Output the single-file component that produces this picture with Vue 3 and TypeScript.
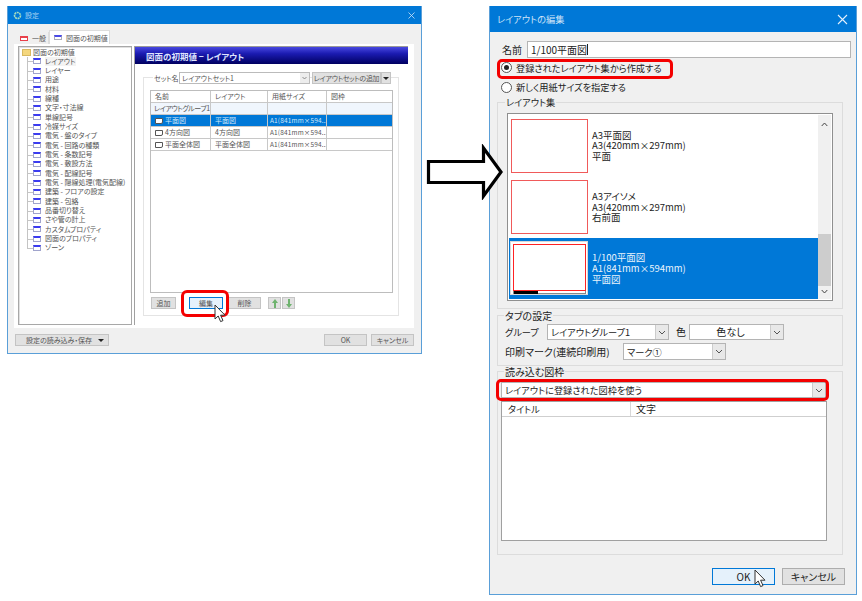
<script setup lang="ts">
const treeItems: string[] = [
  'レイアウト', 'レイヤー', '用途', '材料', '線種', '文字・寸法線', '単線記号', '冷媒サイズ',
  '電気 - 盤のタイプ', '電気 - 回路の種類', '電気 - 条数記号', '電気 - 敷設方法', '電気 - 配線記号',
  '電気 - 隠線処理(電気配線)', '建築 - フロアの設定', '建築 - 包絡', '品番切り替え', 'さや管の計上',
  'カスタムプロパティ', '図面のプロパティ', 'ゾーン'
]
interface Row { name: string; layout: string; size: string; frame: string; icon: boolean; cls: string }
const rows: Row[] = [
  { name: 'レイアウトグループ1', layout: '', size: '', frame: '', icon: false, cls: 'group' },
  { name: '平面図', layout: '平面図', size: 'A1(841mm×594...', frame: '', icon: true, cls: 'sel' },
  { name: '4方向図', layout: '4方向図', size: 'A1(841mm×594...', frame: '', icon: true, cls: '' },
  { name: '平面全体図', layout: '平面全体図', size: 'A1(841mm×594...', frame: '', icon: true, cls: '' }
]
interface Item { lines: string[]; sel: boolean }
const items: Item[] = [
  { lines: ['A3平面図', 'A3(420mm×297mm)', '平面'], sel: false },
  { lines: ['A3アイソメ', 'A3(420mm×297mm)', '右前面'], sel: false },
  { lines: ['1/100平面図', 'A1(841mm×594mm)', '平面図'], sel: true }
]
</script>

<template>
  <div class="stage">
    <!-- settings window -->
    <section class="win win-a">
      <header class="title title-a">
        <svg class="gear" width="9" height="9" viewBox="0 0 9 9"><circle cx="4.5" cy="4.5" r="3" fill="none" stroke="#a6dcc0" stroke-width="1.6" stroke-dasharray="2 .6" /></svg>
        <span class="title-text">設定</span>
        <svg class="close-a" width="7" height="7" viewBox="0 0 7 7"><path d="M.5.5l6 6M6.5.5l-6 6" stroke="#cfe4f7" stroke-width=".8" /></svg>
      </header>
      <div class="tabs">
        <div class="tab"><i class="tab-ico red"></i><span>一般</span></div>
        <div class="tab on"><i class="tab-ico"></i><span>図面の初期値</span></div>
      </div>
      <div class="page">
        <div class="tree">
          <div class="root"><i class="folder"></i><span>図面の初期値</span></div>
          <div class="branch">
            <div v-for="(t, i) in treeItems" :key="t" class="leaf" :class="{ last: i === treeItems.length - 1 }">
              <i class="leaf-ico"></i><span class="leaf-t" :class="{ cur: i === 0 }">{{ t }}</span>
            </div>
          </div>
        </div>
        <div class="pane">
          <div class="banner">図面の初期値 − レイアウト</div>
          <fieldset class="set">
            <div class="set-top">
              <span class="set-lb">セット名</span>
              <div class="mini-combo"><span>レイアウトセット1</span><i class="mini-arrow">
                <svg width="5" height="4" viewBox="0 0 5 4"><path d="M.5 1l2 2 2-2" fill="none" stroke="#777" stroke-width=".8" /></svg></i></div>
              <div class="mini-btn add"><span>レイアウトセットの追加</span></div>
              <div class="mini-btn drop"><i class="tri"></i></div>
            </div>
            <div class="grid-a">
              <div class="tr head"><span class="c1">名前</span><span class="c2">レイアウト</span><span class="c3">用紙サイズ</span><span class="c4">図枠</span></div>
              <div v-for="r in rows" :key="r.name" class="tr" :class="r.cls">
                <span class="c1"><i v-if="r.icon" class="sheet"></i>{{ r.name }}</span>
                <span class="c2">{{ r.layout }}</span><span class="c3 wide">{{ r.size }}</span><span class="c4">{{ r.frame }}</span>
              </div>
            </div>
            <div class="set-btns">
              <div class="mini-btn b1">追加</div>
              <div class="mini-btn b2 hot">編集</div>
              <div class="mini-btn b3">削除</div>
              <div class="mini-btn b4"><svg width="6" height="9" viewBox="0 0 6 9"><path d="M3 0L6 4H4V9H2V4H0Z" fill="#6fb36f" /></svg></div>
              <div class="mini-btn b4"><svg width="6" height="9" viewBox="0 0 6 9"><path d="M3 9L6 5H4V0H2V5H0Z" fill="#6fb36f" /></svg></div>
            </div>
          </fieldset>
        </div>
      </div>
      <footer class="foot-a">
        <div class="mini-btn io"><span>設定の読み込み・保存</span><i class="tri"></i></div>
        <div class="foot-r">
          <div class="mini-btn ok-a">OK</div>
          <div class="mini-btn ok-a">キャンセル</div>
        </div>
      </footer>
    </section>

    <!-- layout edit window -->
    <section class="win win-b">
      <header class="title title-b">
        <span class="title-b-t">レイアウトの編集</span>
        <svg width="11" height="11" viewBox="0 0 11 11"><path d="M1 1l9 9M10 1l-9 9" stroke="#e4f0fb" stroke-width="1.1" /></svg>
      </header>
      <div class="body-b">
        <div class="name-row"><label>名前</label><div class="input">1/100平面図<i class="caret"></i></div></div>
        <div class="radio r1"><i class="dot on"></i>登録されたレイアウト集から作成する</div>
        <div class="radio r2"><i class="dot"></i>新しく用紙サイズを指定する</div>

        <fieldset class="grp g1">
          <legend>レイアウト集</legend>
          <div class="list">
            <div class="list-main">
              <div v-for="it in items" :key="it.lines[0]" class="item" :class="{ sel: it.sel }">
                <div class="thumb"><div class="thumb-red"></div><div v-if="it.sel" class="thumb-bar"><b></b></div></div>
                <div class="item-t"><div v-for="l in it.lines" :key="l">{{ l }}</div></div>
              </div>
            </div>
            <div class="sb">
              <svg width="7" height="5" viewBox="0 0 7 5"><path d="M.7 4l2.8-3 2.8 3" fill="none" stroke="#444" stroke-width="1" /></svg>
              <div class="sb-track"><div class="sb-thumb"></div></div>
              <svg width="7" height="5" viewBox="0 0 7 5"><path d="M.7 1l2.8 3 2.8-3" fill="none" stroke="#444" stroke-width="1" /></svg>
            </div>
          </div>
        </fieldset>

        <fieldset class="grp g2">
          <legend>タブの設定</legend>
          <div class="row-1">
            <label class="l-group">グループ</label>
            <div class="combo w-group"><span>レイアウトグループ1</span><i class="combo-a"><svg width="8" height="5" viewBox="0 0 8 5"><path d="M1 1l3 3 3-3" fill="none" stroke="#555" stroke-width="1" /></svg></i></div>
            <label class="l-color">色</label>
            <div class="combo w-color"><span class="ctr">色なし</span><i class="combo-a"><svg width="8" height="5" viewBox="0 0 8 5"><path d="M1 1l3 3 3-3" fill="none" stroke="#555" stroke-width="1" /></svg></i></div>
          </div>
          <div class="row-2">
            <label class="l-mark">印刷マーク(連続印刷用)</label>
            <div class="combo w-mark"><span>マーク①</span><i class="combo-a"><svg width="8" height="5" viewBox="0 0 8 5"><path d="M1 1l3 3 3-3" fill="none" stroke="#555" stroke-width="1" /></svg></i></div>
          </div>
        </fieldset>

        <fieldset class="grp g3">
          <legend>読み込む図枠</legend>
          <div class="combo w-frame"><span>レイアウトに登録された図枠を使う</span><i class="combo-a"><svg width="8" height="5" viewBox="0 0 8 5"><path d="M1 1l3 3 3-3" fill="none" stroke="#555" stroke-width="1" /></svg></i></div>
          <div class="grid-b">
            <div class="grid-b-h"><span class="t1">タイトル</span><span class="t2">文字</span></div>
          </div>
        </fieldset>

        <div class="foot-b">
          <div class="btn-b hot-b">OK</div>
          <div class="btn-b">キャンセル</div>
        </div>
      </div>
    </section>

    <!-- arrow between the windows, lying over the right one -->
    <svg class="arrow" width="80" height="56" viewBox="0 0 80 56">
      <path d="M2.5 17.5H57.5V4L75 28 57.5 52V38.5H2.5Z" fill="#fff" stroke="#000" stroke-width="3.2" />
    </svg>

    <!-- highlights and pointers lying over the windows -->
    <div class="mark m1"></div>
    <div class="mark m2"></div>
    <div class="mark m3"></div>
    <svg class="ptr p1" width="13" height="19" viewBox="0 0 13 19"><path d="M1 1V15L4.2 12 6.6 17.6 9 16.6 6.6 11.2H11Z" fill="#fff" stroke="#333" stroke-width="1" stroke-linejoin="round" /></svg>
    <svg class="ptr p2" width="13" height="19" viewBox="0 0 13 19"><path d="M1 1V15L4.2 12 6.6 17.6 9 16.6 6.6 11.2H11Z" fill="#fff" stroke="#333" stroke-width="1" stroke-linejoin="round" /></svg>
  </div>
</template>

<style>
html, body { margin: 0; background: #fff; }
</style>

<style scoped>
* { box-sizing: border-box; }
i { display: block; font-style: normal; }
fieldset { margin: 0; min-width: 0; }
.stage {
  position: relative;
  width: 862px;
  height: 601px;
  overflow: hidden;
  background: #fff;
  font-family: "Noto Sans CJK JP", "Noto Sans", sans-serif;
  font-feature-settings: "palt";
  color: #333;
}
.win {
  position: absolute;
  display: flex;
  flex-direction: column;
  background: #f0f0f0;
  border: 1px solid #5a9fd8;
  border-top: 0;
}
.win-a { left: 7px; top: 6px; width: 415px; height: 348px; font-size: 7px; line-height: 10px; color: #555; }
.win-b { left: 489px; top: 6px; width: 368px; height: 589px; font-size: 9.2px; line-height: 12px; color: #222; }

.title { display: flex; align-items: center; background: #0078d7; flex: none; }
.title-a { height: 18px; padding: 0 6px 0 5px; gap: 3px; }
.title-text { color: #a8d2f2; flex: 1; }
.gear { flex: none; }
.title-b { height: 26px; padding: 0 8px 0 7px; justify-content: space-between; }
.title-b-t { color: #cfe4f7; font-size: 9.2px; }

/* settings: tabs */
.tabs { display: flex; align-items: flex-end; height: 20px; padding-left: 8px; flex: none; }
.tab { display: flex; align-items: center; gap: 4px; height: 12px; width: 33px; padding-left: 4px; background: #f0f0f0; border-right: 1px solid #ddd; }
.tab.on { height: 14px; width: 61px; background: #fff; border: 1px solid #ddd; border-bottom: 0; }
.tab-ico { width: 8px; height: 5px; background: #fff; border: 1px solid #aab; border-top: 2px solid #4a4ae8; }
.tab-ico.red { border-color: #e8404a; }

.page { display: flex; gap: 2px; margin: 0 7px 0 6px; height: 284px; background: #fff; padding: 2px 5px 3px 4px; flex: none; }
.tree { width: 114px; height: 279px; border: 1px solid #a8a8a8; box-shadow: inset 1px 1px 0 #e0e0e0; padding: 1px 0 0 10px; flex: none; line-height: 9.34px; }
.root { display: flex; align-items: center; gap: 2px; height: 8.8px; margin-left: -7px; white-space: nowrap; }
.folder { width: 9px; height: 7px; background: #f4d77e; border: 1px solid #d8b960; }
.branch { margin-left: -2px; }
.leaf { position: relative; display: flex; align-items: center; gap: 4px; height: 9.34px; padding-left: 6px; white-space: nowrap; }
.leaf::before { content: ""; position: absolute; left: 0; top: 0; bottom: 0; border-left: 1px solid #c4c4c4; }
.leaf.last::before { bottom: 50%; }
.leaf::after { content: ""; position: absolute; left: 0; top: 50%; width: 6px; border-top: 1px solid #c4c4c4; }
.leaf-ico { width: 8px; height: 6px; background: #fff; border: 1px solid #a0a4cc; border-top: 2px solid #3c3cf0; flex: none; }
.leaf-t.cur { background: #f3f3f3; }

.pane { flex: 1; min-width: 0; display: flex; flex-direction: column; border-left: 1px solid #a0a0a0; }
.banner {
  height: 18px;
  flex: none;
  margin-right: 1px;
  padding-left: 11px;
  color: #dfe4ff;
  font-size: 8.5px;
  line-height: 18px;
  font-weight: 700;
  background: linear-gradient(180deg, #4848e0 0%, #1a1ab0 40%, #000060 100%);
  border-top: 1px solid #9a9a9a;
}
.set { margin: 13px 10px 0 8px; height: 239px; border: 1px solid #e4e4e4; padding: 0; display: flex; flex-direction: column; }
.set-top { display: flex; align-items: center; height: 12px; margin: -6px 0 0 9px; }
.set-lb { background: #fff; padding: 0 1px; width: 26px; white-space: nowrap; }
.mini-combo { display: flex; justify-content: space-between; align-items: center; width: 131px; height: 12px; background: #fff; border: 1px solid #bbb; padding-left: 2px; white-space: nowrap; }
.mini-arrow { width: 9px; height: 10px; background: #ededed; display: flex; align-items: center; justify-content: center; }
.mini-btn { display: flex; align-items: center; justify-content: center; background: #e1e1e1; border: 1px solid #c4c4c4; height: 12px; white-space: nowrap; color: #555; }
.add { width: 69px; margin-left: 2px; letter-spacing: -.3px; }
.drop { width: 10px; }
.tri { width: 0; height: 0; border-left: 3px solid transparent; border-right: 3px solid transparent; border-top: 3px solid #222; }

.grid-a { width: 243px; height: 203px; margin: 6px 0 0 6px; border: 1px solid #bdbdbd; flex: none; }
.tr { display: grid; grid-template-columns: 60px 57px 59px 1fr; height: 12px; border-bottom: 1px solid #c8c8c8; align-items: stretch; }
.tr > span { padding-left: 4px; border-right: 1px solid #c8c8c8; white-space: nowrap; overflow: hidden; line-height: 11px; display: flex; align-items: center; }
.tr > span:last-child { border-right: 0; }
.tr.group { background: #f0f6fd; }
.tr.group .c1 { padding-left: 3px; letter-spacing: -.45px; }
.tr.sel { background: #0078d7; color: #d6e9f9; }
.c1 { gap: 2px; }
.tr .wide { padding-left: 2px; letter-spacing: .15px; font-size: 6.5px; }
.sheet { width: 8px; height: 6px; background: #fff; border: 1px solid #555; border-radius: 0 0 2px 0; flex: none; }

.set-btns { display: flex; margin: 4px 0 0 7px; }
.b1 { width: 25px; }
.b2 { width: 34px; margin-left: 13px; }
.hot { background: #e5f1fb; border-color: #0078d7; }
.b3 { width: 33px; margin-left: 5px; }
.b4 { width: 13px; margin-right: 1px; }
.b3 + .b4 { margin-left: 7px; }

.foot-a { display: flex; justify-content: space-between; padding: 6px 7px 0 7px; }
.io { width: 94px; justify-content: space-between; padding: 0 4px 0 10px; }
.foot-r { display: flex; gap: 4px; }
.ok-a { width: 43px; }

/* edit window */
.body-b { display: flex; flex-direction: column; padding: 9px 5px 0 7px; flex: 1; }
.name-row { display: flex; align-items: center; height: 17px; padding-left: 5px; font-size: 10px; }
.name-row label { width: 25px; }
.input { flex: 1; height: 17px; background: #fff; border: 1px solid #b4b4b4; padding-left: 3px; line-height: 15px; display: flex; align-items: center; }
.caret { width: 1px; height: 11px; background: #222; }
.radio { display: flex; align-items: center; gap: 4px; height: 19px; padding-left: 4px; }
.r2 { height: 18px; margin-top: 1px; }
.dot { width: 11px; height: 11px; border: 1px solid #555; border-radius: 50%; background: #fff; position: relative; }
.dot.on::after { content: ""; position: absolute; inset: 2px; background: #222; border-radius: 50%; }

.grp { border: 1px solid #dcdcdc; padding: 0; display: block; width: 346px; }
.grp legend { font-size: 10px; line-height: 11px; padding: 0 1px; color: #222; }
.g1 { height: 212px; margin-top: 1px; padding: 5px 9px 0 9px; }
.g1 legend { font-size: 9.2px; margin-left: -2px; }
.g2 { height: 56px; margin-top: 1px; padding: 3px 0 0 7px; }
.g2 legend { margin-left: -1px; }
.g3 { height: 189px; margin-top: 0; padding: 5px 0 0 3px; }
.g3 legend { margin-left: 3px; }

.list { display: flex; height: 188px; border: 1px solid #8f8f8f; background: #fff; padding: 1px; }
.list-main { width: 309px; flex: none; display: flex; flex-direction: column; justify-content: flex-end; overflow: hidden; }
.item { display: flex; align-items: center; height: 62px; gap: 4px; padding-left: 2px; }
.item.sel { background: #0078d7; color: #fff; padding-left: 1px; gap: 4px; }
.thumb { width: 77px; height: 54px; background: #fff; border: 1px solid #f05a5a; flex: none; display: flex; flex-direction: column; }
.sel .thumb { width: 78px; height: 54px; border: 1px solid #d8d8d8; padding: 2px 1px 0 2px; }
.thumb-red { height: 47px; border: 1px solid #f22; flex: none; }
.thumb:not(:has(.thumb-bar)) .thumb-red { display: none; }
.thumb-bar { height: 3px; border: 1px solid #888; border-top: 0; background: #fff; flex: none; }
.thumb-bar b { display: block; width: 34%; height: 3px; background: #000; }
.item-t { font-size: 9.5px; line-height: 10.7px; white-space: nowrap; color: #222; }
.sel .item-t { color: #eaf4fc; }
.sb { flex: 1; display: flex; flex-direction: column; align-items: center; background: #f0f0f0; padding: 7px 0 5px; }
.sb-track { flex: 1; width: 100%; display: flex; flex-direction: column; justify-content: flex-end; padding-bottom: 3px; }
.sb-thumb { height: 52px; background: #cdcdcd; }

.row-1 { display: flex; align-items: center; height: 16px; }
.row-2 { display: flex; align-items: center; height: 17px; margin-top: 3px; }
.combo { display: flex; align-items: center; justify-content: space-between; background: #fff; border: 1px solid #b4b4b4; height: 16px; white-space: nowrap; padding-left: 3px; }
.combo span { flex: 1; }
.ctr { text-align: center; padding-right: 2px; font-size: 10px; }
.combo-a { width: 13px; align-self: stretch; background: #e8e8e8; border-left: 1px solid #ccc; display: flex; align-items: center; justify-content: center; flex: none; }
.l-group { width: 42px; }
.w-group { width: 122px; }
.l-color { width: 20px; padding-left: 7px; font-size: 10px; }
.w-color { width: 95px; }
.l-mark { width: 118px; white-space: nowrap; font-size: 10px; }
.w-mark { width: 103px; height: 17px; }
.w-frame { width: 325px; }
.grid-b { width: 326px; height: 140px; margin-top: 3px; background: #fff; border: 1px solid #a0a0a0; }
.grid-b-h { display: flex; height: 15px; border-bottom: 1px solid #cfcfcf; line-height: 14px; }
.t1 { width: 129px; border-right: 1px solid #d8d8d8; padding-left: 6px; }
.t2 { padding-left: 5px; font-size: 10px; }

.foot-b { display: flex; justify-content: flex-end; gap: 7px; margin-top: 13px; padding-right: 6px; font-size: 10px; }
.btn-b { width: 63px; height: 17px; background: #e1e1e1; border: 1px solid #adadad; display: flex; align-items: center; justify-content: center; }
.hot-b { background: #e5f1fb; border-color: #0078d7; }

/* overlays */
.arrow { position: absolute; left: 426px; top: 144px; }
.mark { position: absolute; border: 3px solid #f40000; border-radius: 5px; }
.m1 { left: 181px; top: 290px; width: 48px; height: 27px; border-radius: 6px; }
.m2 { left: 497px; top: 59px; width: 176px; height: 20px; }
.m3 { left: 496px; top: 379px; width: 333px; height: 22px; }
.ptr { position: absolute; }
.p1 { left: 214px; top: 304px; }
.p2 { left: 754px; top: 569px; }
</style>
